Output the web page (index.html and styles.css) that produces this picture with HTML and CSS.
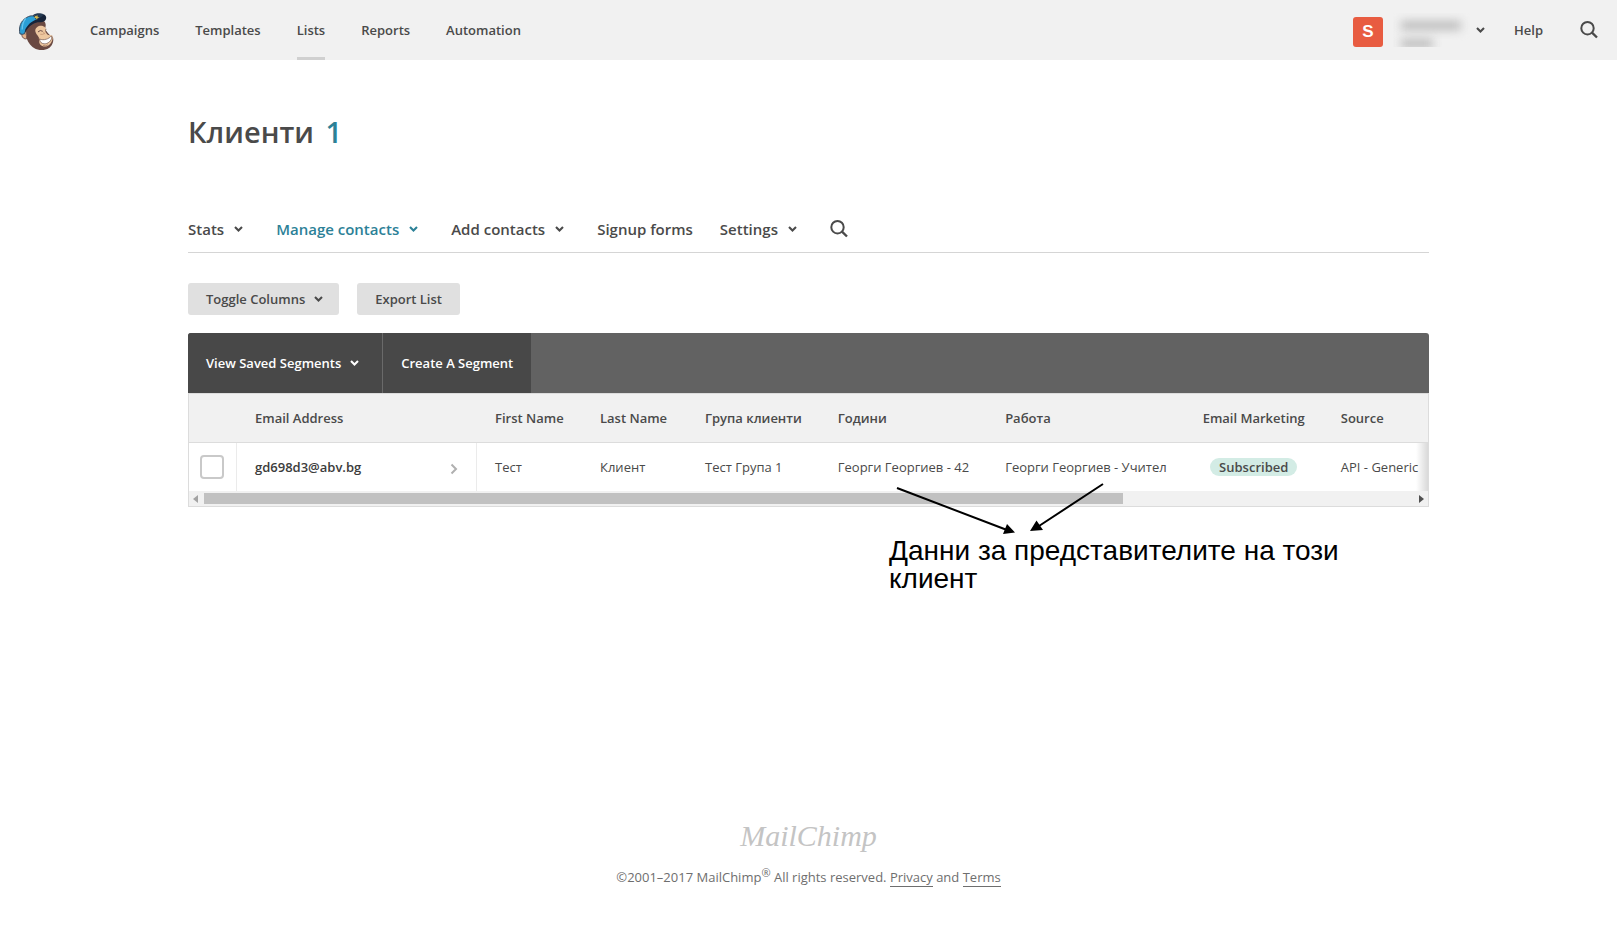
FILE: index.html
```html
<!DOCTYPE html>
<html lang="bg">
<head>
    <meta charset="UTF-8">
    <meta name="viewport" content="width=device-width, initial-scale=1.0">
    <title>Клиенти | MailChimp</title>
    <link rel="stylesheet" href="styles.css">
</head>
<body>

    <!-- Shared icons -->
    <svg class="sprite" aria-hidden="true">
        <symbol id="chevron" viewBox="0 0 9 6">
            <path d="M1 1l3.5 3.5L8 1" fill="none" stroke="currentColor" stroke-width="2.1"/>
        </symbol>
        <symbol id="search" viewBox="0 0 18 18">
            <circle cx="7.5" cy="7.2" r="6.2" fill="none" stroke="currentColor" stroke-width="2"/>
            <path d="M12 11.7l5 4.8" fill="none" stroke="currentColor" stroke-width="2.4"/>
        </symbol>
    </svg>

    <header class="topbar">
        <a href="#" class="logo" aria-label="MailChimp">
            <svg viewBox="22 22 116 118" width="38" height="38">
                <path d="M42 94C35 94 28 88 29 81C30 74 37 71 43 74C47 50 62 40 84 42C98 44 108 52 107 64L105 76C112 84 119 96 129 99C134 112 127 130 112 137C98 143 78 141 66 131C55 122 48 108 46 96Z" fill="#6a4942"/>
                <path d="M48 105C40 107 33 101 33 92C33 83 41 79 48 83Z" fill="#e4b48e" stroke="#6a4942" stroke-width="3"/>
                <path d="M41 90q5-2 6 6" fill="none" stroke="#a77a60" stroke-width="2"/>
                <path d="M80 69C88 62 98 64 103 68C109 72 108 78 106 83C111 89 112 96 127 94C131 104 127 121 111 128C97 132 84 123 87 108C89 102 79 94 76 86C73 78 75 72 80 69Z" fill="#edc7a0"/>
                <path d="M83 84q7-8 15-2M105 79l4-3" fill="none" stroke="#6a4942" stroke-width="3"/>
                <path d="M100 84l4 7M90 91q8 2 13-2" fill="none" stroke="#ba8868" stroke-width="2"/>
                <path d="M88 106C101 111 117 106 125 96C128 107 119 119 105 121C94 121 88 115 88 106Z" fill="#fff" stroke="#6a4942" stroke-width="2"/>
                <path d="M84 104q3 6 6 3M99 126q8 3 15-2" fill="none" stroke="#986b55" stroke-width="2"/>
                <path d="M27 90C23 70 28 50 48 39C62 30 77 34 87 43L53 66Q43 72 42 89Q36 93 27 90Z" fill="#2b9fd6" stroke="#39485a" stroke-width="3"/>
                <path d="M45 42Q34 55 34 76" fill="none" stroke="#68c5ee" stroke-width="4"/>
                <path d="M42 87C45 67 57 54 77 45C86 41 93 36 99 29C108 31 111 39 107 46C99 58 86 50 72 57C56 64 50 75 42 87Z" fill="#17243a"/>
                <path d="M67 32C77 24 92 25 100 29C94 38 86 43 77 45Z" fill="#253a53"/>
                <path d="M72 33l5 2 4-4 1 6 6 2-6 2-2 5-4-5-5 0 3-4Z" fill="#d4b84e"/>
            </svg>
        </a>
        <nav class="main-nav">
            <a href="#">Campaigns</a>
            <a href="#">Templates</a>
            <a href="#" class="active">Lists</a>
            <a href="#">Reports</a>
            <a href="#">Automation</a>
        </nav>
        <div class="account">
            <button type="button" class="account-menu" aria-label="Account">
                <span class="avatar">S</span>
                <span class="account-name"><i></i><i></i></span>
                <svg class="chevron"><use href="#chevron"/></svg>
            </button>
            <a href="#" class="help">Help</a>
            <button type="button" class="icon-btn" aria-label="Search"><svg><use href="#search"/></svg></button>
        </div>
    </header>

    <main class="content">
        <h1>Клиенти <a href="#">1</a></h1>

        <nav class="tabs">
            <a href="#" class="drop">Stats <svg class="chevron"><use href="#chevron"/></svg></a>
            <a href="#" class="drop active">Manage contacts <svg class="chevron"><use href="#chevron"/></svg></a>
            <a href="#" class="drop">Add contacts <svg class="chevron"><use href="#chevron"/></svg></a>
            <a href="#">Signup forms</a>
            <a href="#" class="drop">Settings <svg class="chevron"><use href="#chevron"/></svg></a>
            <button type="button" class="icon-btn" aria-label="Search contacts"><svg><use href="#search"/></svg></button>
        </nav>

        <div class="actions">
            <button type="button" class="btn btn-drop">Toggle Columns <svg class="chevron"><use href="#chevron"/></svg></button>
            <button type="button" class="btn">Export List</button>
        </div>

        <section class="list">
            <div class="segments">
                <button type="button" class="saved">View Saved Segments <svg class="chevron"><use href="#chevron"/></svg></button>
                <button type="button">Create A Segment</button>
            </div>

            <div class="table-box">
                <div class="table-scroll">
                    <table>
                        <thead>
                            <tr>
                                <th class="check"></th>
                                <th class="email">Email Address</th>
                                <th>First Name</th>
                                <th>Last Name</th>
                                <th>Група клиенти</th>
                                <th>Години</th>
                                <th>Работа</th>
                                <th>Email Marketing</th>
                                <th>Source</th>
                            </tr>
                        </thead>
                        <tbody>
                            <tr>
                                <td class="check"><input type="checkbox" aria-label="gd698d3@abv.bg"></td>
                                <td class="email">
                                    <a href="#">gd698d3@abv.bg
                                        <svg class="arrow" viewBox="0 0 8 12"><path d="M1.5 1.500L6 6l-4.500 4.500" fill="none" stroke="currentColor" stroke-width="2"/></svg>
                                    </a>
                                </td>
                                <td>Тест</td>
                                <td>Клиент</td>
                                <td>Тест Група 1</td>
                                <td>Георги Георгиев - 42</td>
                                <td>Георги Георгиев - Учител</td>
                                <td class="status"><span class="badge">Subscribed</span></td>
                                <td>API - Generic</td>
                            </tr>
                        </tbody>
                    </table>
                </div>
                <div class="scrollbar" aria-hidden="true">
                    <svg viewBox="0 0 5 8"><path d="M5 0v8L0 4z" fill="#a3a3a3"/></svg>
                    <div class="track"><div class="thumb"></div></div>
                    <svg viewBox="0 0 5 8"><path d="M0 0v8l5-4z" fill="#505050"/></svg>
                </div>
            </div>

            <!-- Note over the table -->
            <div class="note">
                <svg viewBox="0 0 220 55" width="220" height="55" aria-hidden="true">
                    <path d="M8 6l110 42M214 2L150 44" stroke="#000" stroke-width="2" fill="none"/>
                    <path d="M126 50.500l-12 1.500 4-10zM141 49l6.500-10.500 6.500 9.500z"/>
                </svg>
                <p>Данни за представителите на този<br>клиент</p>
            </div>
        </section>
    </main>

    <footer class="footer">
        <a href="#" class="wordmark">MailChimp</a>
        <p>©2001–2017 MailChimp<sup>®</sup> All rights reserved. <a href="#">Privacy</a> and <a href="#">Terms</a></p>
    </footer>

</body>
</html>
```
FILE: styles.css
```css
* {
    box-sizing: border-box;
}

body {
    margin: 0;
    font-family: "Open Sans", "Noto Sans", sans-serif;
    font-size: 13px;
    line-height: 18px;
    color: #4a4a4a;
    background: #fff;
}

a {
    color: inherit;
    text-decoration: none;
}

button {
    font: inherit;
    font-weight: 600;
    color: inherit;
    border: 0;
    padding: 0;
    background: none;
    cursor: pointer;
}

.sprite {
    display: none;
}

.chevron {
    width: 9px;
    height: 6px;
    margin-left: 9px;
}

.icon-btn svg {
    display: block;
    width: 18px;
    height: 18px;
}

/* Top bar */
.topbar {
    display: flex;
    align-items: center;
    height: 60px;
    padding: 0 19px 0 18px;
    background: #f1f1f1;
    font-weight: 600;
}

.logo svg {
    display: block;
    margin-top: 2px;
}

.main-nav {
    display: flex;
    gap: 36px;
    margin-left: 34px;
}

.main-nav a {
    line-height: 60px;
}

.main-nav .active {
    box-shadow: inset 0 -3px #d0d0d0;
}

.account {
    display: flex;
    align-items: center;
    margin-left: auto;
}

.account-menu {
    display: flex;
    align-items: center;
}

.avatar {
    width: 30px;
    height: 30px;
    margin-top: 4px;
    border-radius: 3px;
    background: #e85c41;
    color: #fff;
    font: bold 17px/30px "Liberation Sans", Arial, sans-serif;
}

.account-name {
    width: 82px;
    height: 34px;
    margin-left: 10px;
    padding: 8px;
    overflow: hidden;
}

.account-name i {
    display: block;
    width: 60px;
    height: 9px;
    margin-bottom: 9px;
    background: #bbb;
    filter: blur(5px);
}

.account-name i + i {
    width: 32px;
}

.account-menu .chevron {
    margin-left: 1px;
}

.help {
    margin: 0 37px 0 29px;
}

/* Page content */
.content {
    padding: 50px 188px 0;
}

h1 {
    margin: 0;
    font-size: 29px;
    line-height: 44px;
    font-weight: 600;
}

h1 a {
    margin-left: 4px;
    color: #2c8197;
}

.tabs {
    display: flex;
    align-items: center;
    gap: 27px;
    height: 49px;
    margin-top: 50px;
    padding-top: 1px;
    border-bottom: 1px solid #d5d5d5;
    font-size: 15px;
    font-weight: 600;
}

.tabs a {
    display: flex;
    align-items: center;
}

.tabs .drop {
    padding-right: 6px;
}

.tabs .chevron {
    margin-left: 10px;
}

.tabs .active {
    color: #2c8197;
}

.actions {
    display: flex;
    gap: 18px;
    margin: 30px 0 18px;
}

.btn {
    display: flex;
    align-items: center;
    height: 32px;
    padding: 0 18px;
    border-radius: 3px;
    background: #e0e0e0;
}

.btn-drop {
    padding-right: 16px;
}

/* List table */
.list {
    position: relative;
}

.segments {
    display: flex;
    height: 60px;
    border-radius: 3px 3px 0 0;
    background: #626262;
    overflow: hidden;
}

.segments button {
    display: flex;
    align-items: center;
    padding: 0 18px;
    background: #484848;
    color: #fff;
}

.segments .saved {
    padding-right: 23px;
    border-right: 1px solid #6a6a6a;
}

.table-box {
    border: 1px solid #dcdcdc;
}

.table-scroll {
    position: relative;
    overflow: hidden;
}

/* Shadow where the columns run out of view */
.table-scroll::after {
    content: "";
    position: absolute;
    right: 0;
    top: 49px;
    bottom: 0;
    width: 12px;
    background: linear-gradient(to right, rgba(0, 0, 0, 0), rgba(0, 0, 0, 0.15));
}

table {
    border-collapse: separate;
    border-spacing: 0;
    white-space: nowrap;
}

th,
td {
    height: 49px;
    padding: 0 18px;
    text-align: left;
}

th {
    min-width: 105px;
    background: #f1f1f1;
    border-bottom: 1px solid #dcdcdc;
    font-weight: 600;
}

th:last-child {
    min-width: 200px;
}

td {
    height: 48px;
}

.check {
    min-width: 48px;
    padding: 0 11px;
}

.email {
    min-width: 240px;
}

td.check,
td.email {
    border-right: 1px solid #ebebeb;
}

td.email a {
    display: flex;
    align-items: center;
    justify-content: space-between;
    font-weight: 600;
    color: #3c3c3c;
}

.arrow {
    width: 8px;
    height: 12px;
    margin-top: 4px;
    color: #b0b0b0;
}

input[type="checkbox"] {
    display: block;
    appearance: none;
    width: 24px;
    height: 24px;
    margin: 0;
    border: 2px solid #c9c9c9;
    border-radius: 4px;
    background: #fff;
}

.status {
    text-align: center;
}

.badge {
    display: inline-block;
    padding: 0 9px;
    border-radius: 9px;
    background: #d3ece5;
    font-weight: 600;
}

.scrollbar {
    display: flex;
    align-items: center;
    gap: 6px;
    height: 15px;
    padding: 0 4px;
    background: #f1f1f1;
}

.scrollbar svg {
    width: 5px;
    height: 8px;
}

.track {
    flex: 1;
}

.thumb {
    width: 76%;
    height: 11px;
    background: #c1c1c1;
}

/* Note */
.note {
    position: absolute;
    left: 701px;
    top: 149px;
    color: #000;
    font: 28px/28px "Liberation Sans", Arial, sans-serif;
}

.note svg {
    display: block;
}

.note p {
    margin: 0;
    white-space: nowrap;
}

/* Footer */
.footer {
    margin-top: 311px;
    text-align: center;
    color: #6e6e6e;
}

.footer p {
    margin: 14px 0 0;
}

.footer p a {
    display: inline-block;
    border-bottom: 1px solid #6e6e6e;
}

.footer sup {
    font-size: 11px;
    line-height: 0;
}

.wordmark {
    display: block;
    color: #c4c4c4;
    font: italic 30px/36px "Liberation Serif", serif;
}
```
